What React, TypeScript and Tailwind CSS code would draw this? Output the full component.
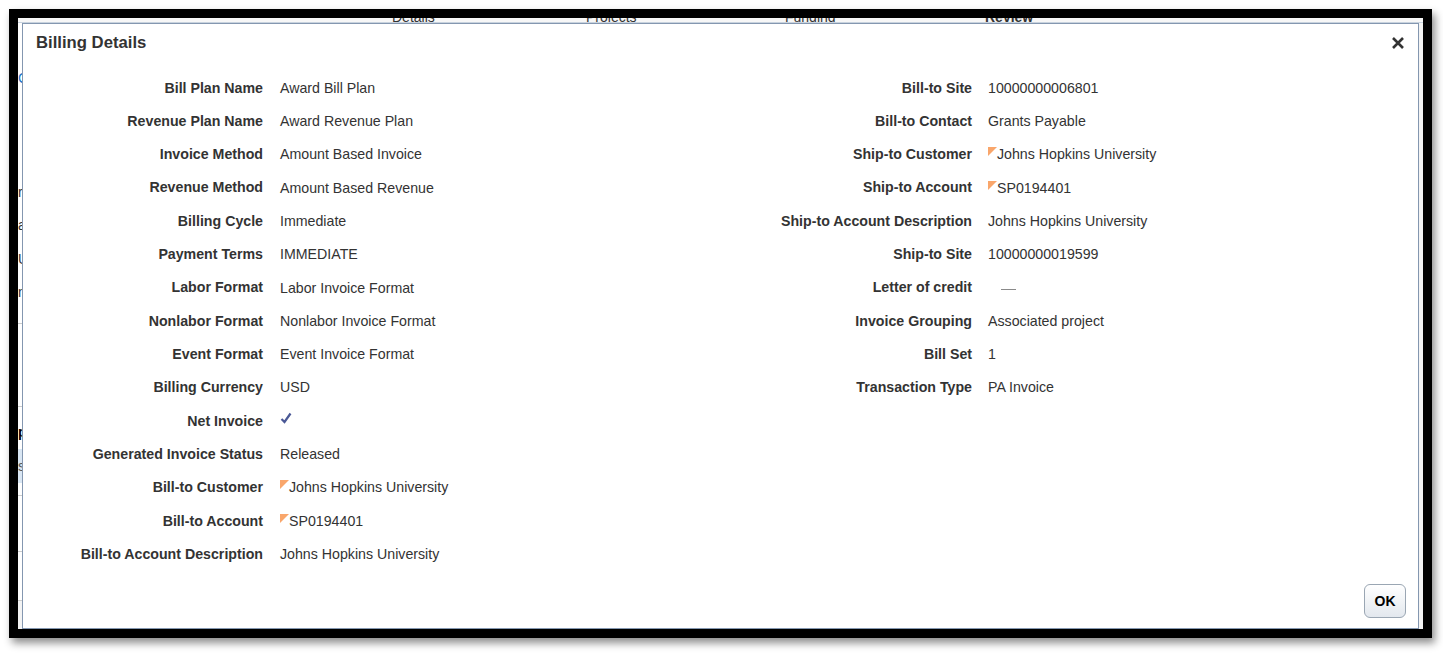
import React from "react";

const FONT = { fontFamily: '"Liberation Sans", Arial, sans-serif' };

type Row = { label: string; value?: string; flag?: boolean; check?: boolean; dash?: boolean };

const LEFT_ROWS: Row[] = [
  { label: "Bill Plan Name", value: "Award Bill Plan" },
  { label: "Revenue Plan Name", value: "Award Revenue Plan" },
  { label: "Invoice Method", value: "Amount Based Invoice" },
  { label: "Revenue Method", value: "Amount Based Revenue" },
  { label: "Billing Cycle", value: "Immediate" },
  { label: "Payment Terms", value: "IMMEDIATE" },
  { label: "Labor Format", value: "Labor Invoice Format" },
  { label: "Nonlabor Format", value: "Nonlabor Invoice Format" },
  { label: "Event Format", value: "Event Invoice Format" },
  { label: "Billing Currency", value: "USD" },
  { label: "Net Invoice", check: true },
  { label: "Generated Invoice Status", value: "Released" },
  { label: "Bill-to Customer", value: "Johns Hopkins University", flag: true },
  { label: "Bill-to Account", value: "SP0194401", flag: true },
  { label: "Bill-to Account Description", value: "Johns Hopkins University" },
];

const RIGHT_ROWS: Row[] = [
  { label: "Bill-to Site", value: "10000000006801" },
  { label: "Bill-to Contact", value: "Grants Payable" },
  { label: "Ship-to Customer", value: "Johns Hopkins University", flag: true },
  { label: "Ship-to Account", value: "SP0194401", flag: true },
  { label: "Ship-to Account Description", value: "Johns Hopkins University" },
  { label: "Ship-to Site", value: "10000000019599" },
  { label: "Letter of credit", dash: true },
  { label: "Invoice Grouping", value: "Associated project" },
  { label: "Bill Set", value: "1" },
  { label: "Transaction Type", value: "PA Invoice" },
];

function Flag() {
  // small orange corner marker used on LOV-backed values
  return (
    <svg width="9" height="9" viewBox="0 0 9 9" className="mt-[1px] shrink-0">
      <path d="M0 0 H9 L0 9 Z" fill="#f9a66b" />
    </svg>
  );
}

function Value({ row }: { row: Row }) {
  if (row.check) {
    return (
      <svg width="12" height="12" viewBox="0 0 12 12" className="mb-[6px]">
        <path d="M1.5 7 L4.5 10 L10.5 1.5" fill="none" stroke="#4a5896" strokeWidth="2.2" />
      </svg>
    );
  }
  if (row.dash) {
    return <span className="ml-[13px] mt-[3px] block h-[1px] w-[15px] bg-[#8a8a8a]" />;
  }
  return (
    <span className="flex items-start leading-[16px]">
      {row.flag && <Flag />}
      {row.value}
    </span>
  );
}

function FieldBlock({ rows, labelWidth, gap }: { rows: Row[]; labelWidth: string; gap: string }) {
  return (
    <div className="flex flex-col">
      {rows.map((r) => (
        <div key={r.label} className={`flex h-[33.32px] items-center ${gap}`}>
          <div className={`${labelWidth} pt-[1px] text-right font-bold text-[#333]`}>{r.label}</div>
          <div className="flex items-center text-[#333]">
            <Value row={r} />
          </div>
        </div>
      ))}
    </div>
  );
}

function BackgroundPage() {
  return (
    <div className="flex h-full flex-col bg-[#f3f3f3] text-[14px] text-[#333]">
      <div className="flex h-[5px] overflow-hidden border-b border-[#c9d3de] bg-[#f7f7f7]">
        <div className="mt-[-11px] flex">
          <span className="ml-[374px] w-[194px]">Details</span>
          <span className="w-[199px]">Projects</span>
          <span className="w-[200px]">Funding</span>
          <span className="font-bold">Review</span>
        </div>
      </div>
      <div className="flex w-[6px] flex-col border-r border-[#cfd4da] bg-white leading-[16px]">
        <span className="mt-[47px] text-[#1a73c8]">C</span>
        <span className="mt-[98px]">r</span>
        <span className="mt-[17px]">a</span>
        <span className="mt-[18px]">U</span>
        <span className="mt-[17px]">n</span>
        <div className="mt-[23px] h-[1px] bg-[#ccc]" />
        <div className="mt-[82px] h-[1px] bg-[#ccc]" />
        <span className="mt-[17px] font-bold text-black">p</span>
        <div className="mt-[9px] flex h-[34px] items-center bg-[#d9e6f3] text-[#555]">s</div>
        <div className="mt-[12px] h-[1px] bg-[#ccc]" />
        <div className="mt-[55px] h-[1px] bg-[#ccc]" />
        <div className="mt-[48px] h-[1px] bg-[#ccc]" />
      </div>
    </div>
  );
}

export default function App() {
  return (
    <div className="h-[656px] w-[1443px] bg-white pl-[9px] pt-[9px]" style={FONT}>
      <div className="h-[629px] w-[1423px] border-[9px] border-black shadow-[3px_5px_8px_rgba(0,0,0,0.45)]">
        <div className="relative h-full w-full overflow-hidden">
          <BackgroundPage />

          {/* modal dialog over the page */}
          <div className="absolute bottom-0 left-[4px] top-[5px] flex w-[1397px] flex-col border border-[#8497b0] bg-white text-[14.2px]">
            <div className="flex h-[47px] items-start justify-between pl-[13px] pr-[13px] pt-[9px]">
              <h1 className="text-[16.7px] font-bold leading-[20px] text-[#333]">Billing Details</h1>
              <svg width="14" height="14" viewBox="0 0 14 14" className="mt-[3px]">
                <path d="M2 2 L12 12 M12 2 L2 12" stroke="#333" strokeWidth="2.6" />
              </svg>
            </div>

            <div className="flex">
              <div className="w-[701px]">
                <FieldBlock rows={LEFT_ROWS} labelWidth="w-[240px]" gap="gap-[17px]" />
              </div>
              <FieldBlock rows={RIGHT_ROWS} labelWidth="w-[248px]" gap="gap-[16px]" />
            </div>

            <div className="mt-auto flex justify-end pb-[10px] pr-[12px]">
              <button className="h-[34px] w-[42px] rounded-[6px] border border-[#9aa6b3] bg-gradient-to-b from-white to-[#e3e8ee] text-[14px] font-bold text-black">
                OK
              </button>
            </div>
          </div>
        </div>
      </div>
    </div>
  );
}
